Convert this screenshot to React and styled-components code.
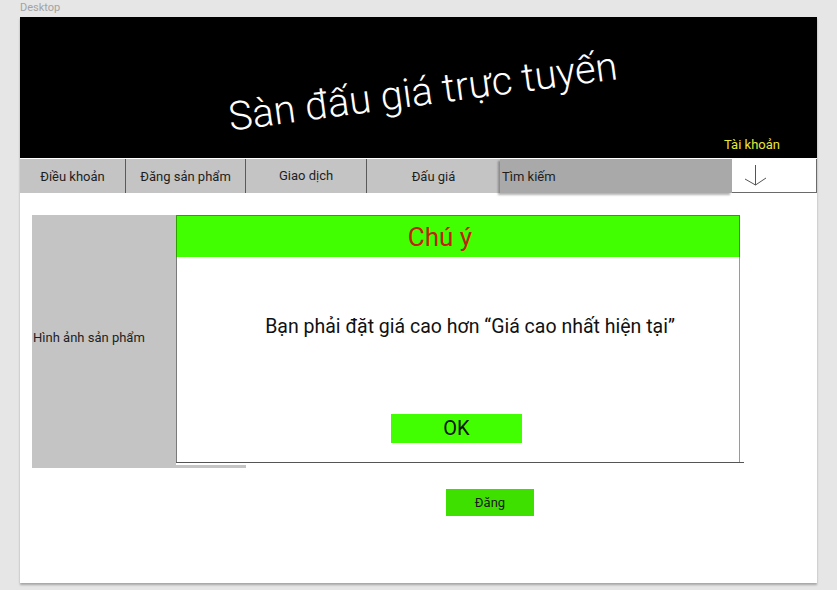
import React from "react";
import styled, { createGlobalStyle } from "styled-components";

const Global = createGlobalStyle`
  html, body { margin: 0; padding: 0; background: #e6e6e6; }
  body { font-family: Roboto, "Noto Sans", "Liberation Sans", sans-serif; }
  * { box-sizing: border-box; }
`;

const Page = styled.div`
  width: 837px;
  height: 590px;
  padding: 0 20px;
  display: flex;
  flex-direction: column;
  overflow: hidden;
`;

const Label = styled.div`
  height: 17px;
  font-size: 11px;
  line-height: 16px;
  color: #a3a3a3;
`;

const Frame = styled.div`
  width: 797px;
  height: 566px;
  background: #fff;
  display: flex;
  flex-direction: column;
  box-shadow: 0 2px 2px rgba(0, 0, 0, 0.28);
`;

const Header = styled.header`
  height: 141px;
  background: #000;
  display: flex;
  flex-direction: column;
`;

const TitleArea = styled.div`
  flex: 1;
  display: flex;
  align-items: center;
  justify-content: center;
  padding: 28px 0 0 8px;
`;

const Title = styled.h1`
  margin: 0;
  font-weight: 300;
  font-size: 40px;
  color: #fff;
  white-space: nowrap;
  transform: rotate(-7.6deg);
`;

const AccountRow = styled.div`
  display: flex;
  justify-content: flex-end;
  padding: 0 37px 6px 0;
`;

const Account = styled.span`
  font-size: 13px;
  line-height: 15px;
  color: #e8e63a;
`;

const Nav = styled.nav`
  height: 34px;
  margin-top: 1px;
  display: flex;
  position: relative;
`;

const NavItem = styled.div`
  width: ${(p) => p.$w}px;
  background: #c4c4c4;
  display: flex;
  align-items: center;
  justify-content: center;
  font-size: 13px;
  color: #1e1e1e;
  padding-bottom: ${(p) => (p.$up ? 2 : 0)}px;
  border-right: ${(p) => (p.$div ? "1px solid #5a5a5a" : "none")};
`;

const Search = styled.div`
  width: 232px;
  background: #a9a9a9;
  display: flex;
  align-items: center;
  padding-left: 2px;
  font-size: 13px;
  color: #1e1e1e;
  box-shadow: -2px 2px 2px rgba(0, 0, 0, 0.3);
  z-index: 1;
`;

const ArrowBox = styled.div`
  width: 85px;
  background: #fff;
  border-right: 1px solid #6a6a6a;
  border-bottom: 1px solid #6a6a6a;
  display: flex;
  align-items: center;
  padding-left: 12px;
`;

const Content = styled.div`
  padding: 22px 0 0 12px;
  display: flex;
  flex-direction: column;
`;

const Stage = styled.div`
  display: flex;
  height: 253px;
  position: relative;
`;

const ImageBox = styled.div`
  width: 144px;
  background: #c4c4c4;
  display: flex;
  align-items: center;
  padding: 0 0 8px 1px;
  font-size: 13px;
  color: #1e1e1e;
`;

const Peek = styled.div`
  position: absolute;
  left: 144px;
  bottom: 0;
  width: 70px;
  height: 3px;
  background: #c4c4c4;
`;

const Dialog = styled.div`
  width: 564px;
  height: 248px;
  background: #fff;
  border-left: 1px solid #7a7a7a;
  border-right: 1px solid #9a9a9a;
  display: flex;
  flex-direction: column;
  position: relative;
  z-index: 1;
  &::after {
    content: "";
    position: absolute;
    left: -1px;
    right: -5px;
    bottom: 0;
    height: 1px;
    background: #555;
  }
`;

const DialogHead = styled.div`
  height: 42px;
  margin-left: -1px;
  margin-right: -1px;
  background: #41ff00;
  border: 1px solid #2fa000;
  border-bottom: none;
  display: flex;
  align-items: center;
  justify-content: center;
  font-size: 26px;
  color: #c3200a;
  padding: 0 36px 0 0;
`;

const Message = styled.p`
  margin: 58px 0 0;
  text-align: center;
  font-size: 19.5px;
  color: #111;
  padding-left: 24px;
`;

const OkButton = styled.button`
  margin: auto 0 20px 214px;
  width: 131px;
  height: 29px;
  border: none;
  background: #41ff00;
  font-family: inherit;
  font-size: 20px;
  color: #111;
  padding: 0 0 2px;
`;

const PostButton = styled.button`
  margin: 21px 0 0 414px;
  width: 88px;
  height: 27px;
  border: none;
  background: #3ee000;
  font-family: inherit;
  font-size: 13px;
  color: #1a1a1a;
  padding: 0;
`;

const DownArrow = () => (
  <svg width="24" height="24" viewBox="0 0 24 24" fill="none" stroke="#555" strokeWidth="1">
    <path d="M11.5 1 V21" />
    <path d="M1 15 L11.5 21 L22 14" />
  </svg>
);

export default function App() {
  return (
    <>
      <Global />
      <Page>
        <Label>Desktop</Label>
        <Frame>
          <Header>
            <TitleArea>
              <Title>Sàn đấu giá trực tuyến</Title>
            </TitleArea>
            <AccountRow>
              <Account>Tài khoản</Account>
            </AccountRow>
          </Header>
          <Nav>
            <NavItem $w={106} $div>Điều khoản</NavItem>
            <NavItem $w={120} $div>Đăng sản phẩm</NavItem>
            <NavItem $w={121} $div $up>Giao dịch</NavItem>
            <NavItem $w={133}>Đấu giá</NavItem>
            <Search>Tìm kiếm</Search>
            <ArrowBox>
              <DownArrow />
            </ArrowBox>
          </Nav>
          <Content>
            <Stage>
              <ImageBox>Hình ảnh sản phẩm</ImageBox>
              <Dialog>
                <DialogHead>Chú ý</DialogHead>
                <Message>Bạn phải đặt giá cao hơn “Giá cao nhất hiện tại”</Message>
                <OkButton>OK</OkButton>
              </Dialog>
              <Peek />
            </Stage>
            <PostButton>Đăng</PostButton>
          </Content>
        </Frame>
      </Page>
    </>
  );
}
